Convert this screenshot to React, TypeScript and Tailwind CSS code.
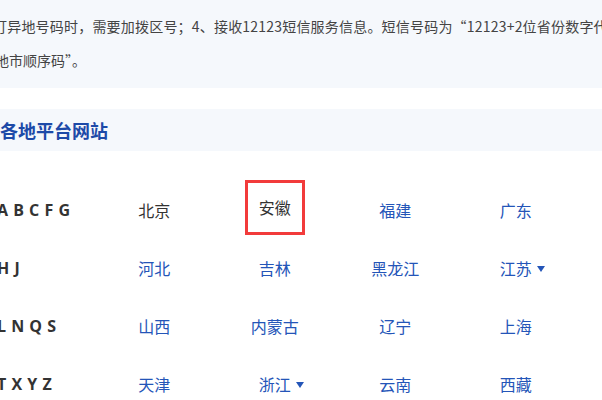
const cjk = '"Noto Sans CJK SC", "Microsoft YaHei", sans-serif';

interface City {
  name: string;
  dark?: boolean;
  drop?: boolean;
  boxed?: boolean;
}

const rows: { letters: string; cities: City[] }[] = [
  {
    letters: 'A B C F G',
    cities: [{ name: '北京', dark: true }, { name: '安徽', dark: true, boxed: true }, { name: '福建' }, { name: '广东' }],
  },
  {
    letters: 'H J',
    cities: [{ name: '河北' }, { name: '吉林' }, { name: '黑龙江' }, { name: '江苏', drop: true }],
  },
  {
    letters: 'L N Q S',
    cities: [{ name: '山西' }, { name: '内蒙古' }, { name: '辽宁' }, { name: '上海' }],
  },
  {
    letters: 'T X Y Z',
    cities: [{ name: '天津' }, { name: '浙江', drop: true }, { name: '云南' }, { name: '西藏' }],
  },
];

function CityLink({ city }: { city: City }) {
  const color = city.dark ? 'text-[#333333]' : 'text-[#2455b8]';
  if (city.boxed) {
    return (
      <a className={`-mt-[5px] border-[3px] border-[#f23b3b] px-[11px] py-[13px] text-[16px] leading-[23px] ${color}`}>
        {city.name}
      </a>
    );
  }
  return (
    <a className={`relative text-[16px] leading-[23px] ${color}`}>
      {city.name}
      {city.drop && (
        <span className="absolute left-full top-[9px] ml-[5px] h-0 w-0 border-x-[4px] border-t-[6px] border-x-transparent border-t-[#2455b8]" />
      )}
    </a>
  );
}

export default function App() {
  return (
    <div className="h-[400px] w-[602px] overflow-hidden bg-white" style={{ fontFamily: cjk }}>
      {/* notice text */}
      <div className="h-[88px] overflow-hidden bg-[#f5f8fc] pt-[9px] text-[14px] leading-[34px] text-[#444444]">
        <p className="-ml-[7px] whitespace-nowrap tracking-[0.2px]">
          打异地号码时，需要加拨区号；4、接收12123短信服务信息。短信号码为“12123+2位省份数字代码+地市顺序码”。
        </p>
        <p className="-ml-[5px] whitespace-nowrap">地市顺序码”。</p>
      </div>

      {/* section title */}
      <div className="mt-[21px] flex h-[42px] items-center bg-[#f5f8fc]">
        <h2 className="text-[18px] font-bold text-[#1d4aa8]">各地平台网站</h2>
      </div>

      {/* city grid */}
      <div className="mt-[30px]">
        {rows.map((row) => (
          <div key={row.letters} className="flex h-[58px] items-center">
            <div
              className="-ml-[3px] w-[97px] whitespace-nowrap text-[16px] font-bold tracking-[0.5px] text-[#333333]"
              style={{ fontFamily: '"Open Sans", sans-serif' }}
            >
              {row.letters}
            </div>
            {row.cities.map((c) => (
              <div key={c.name} className="flex w-[120.5px] shrink-0 justify-center">
                <CityLink city={c} />
              </div>
            ))}
          </div>
        ))}
      </div>
    </div>
  );
}
